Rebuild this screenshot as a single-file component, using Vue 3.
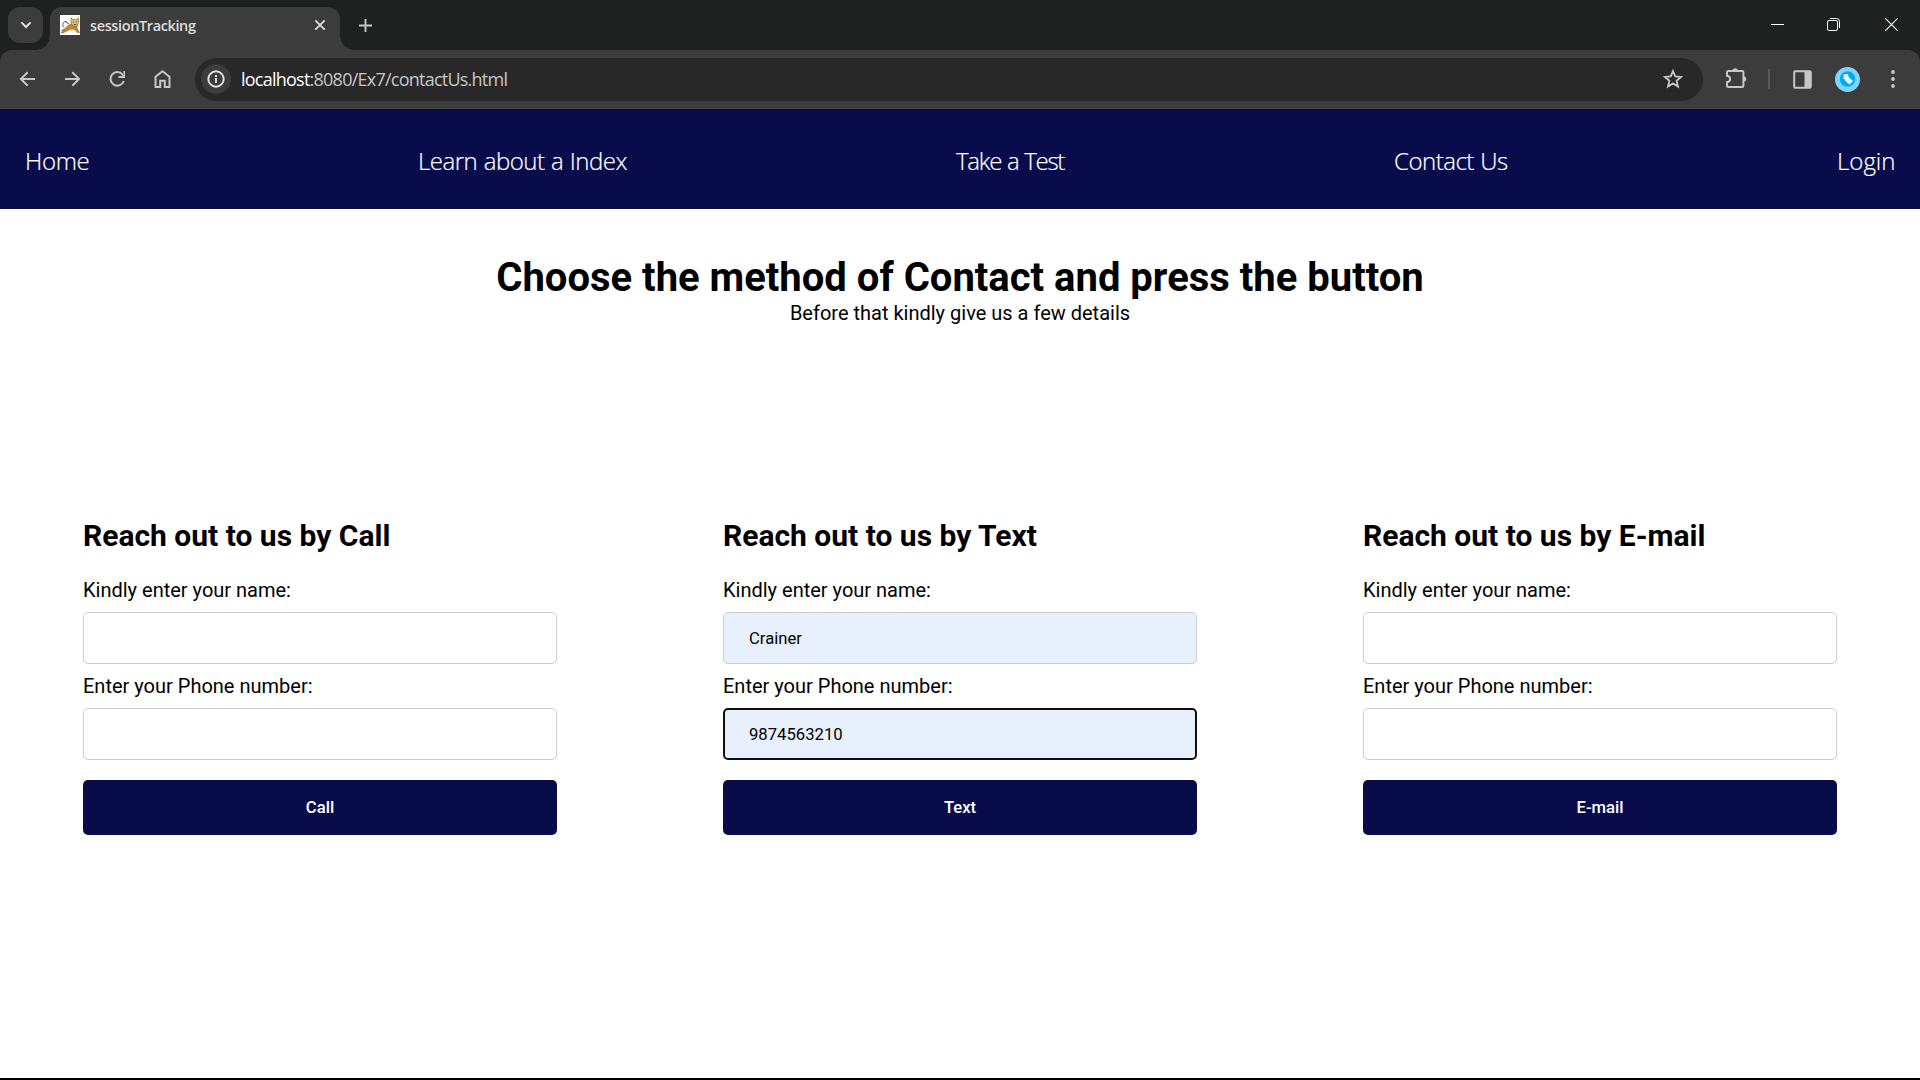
<script setup>
const links = [
  { text: 'Home', w: 65, ls: -0.35 },
  { text: 'Learn about a Index', w: 210, ls: -0.5 },
  { text: 'Take a Test', w: 110, ls: -1.25 },
  { text: 'Contact Us', w: 115, ls: -0.5 },
  { text: 'Login', w: 58, ls: 0 },
]
const forms = [
  { kind: 'Call', name: '', phone: '' },
  { kind: 'Text', name: 'Crainer', phone: '9874563210' },
  { kind: 'E-mail', name: '', phone: '' },
]
</script>

<template>
  <div class="window">
    <div class="tabstrip">
      <div class="search-tabs">
        <svg width="12" height="8" viewBox="0 0 12 8"><path d="M1.400 1.400 6 6l4.600-4.600" fill="none" stroke="#e3e3e3" stroke-width="2" /></svg>
      </div>
      <div class="tab">
        <svg class="favicon" width="20" height="20" viewBox="0 0 20 20">
          <rect width="20" height="20" fill="#fff" />
          <path d="M4 12.500C1.500 10 3 6 6.500 6.500M1.500 15.500l4-1.500M5 6.500l4 2.500" fill="none" stroke="#444" stroke-width=".9" />
          <path d="M6.500 12c2-2.500 4-2.500 6-3.500l5 .5-.5 4 2.500 4.500-2 .3-3-3.300-4-.2-4 1.900-4 2-1.500-.4 3.500-3.300z" fill="#c4892c" stroke="#5d4620" stroke-width=".4" />
          <path d="m11 3 2.300 1.600h3L18.500 3v5l-2 3.500h-3L11 8z" fill="#e6bf68" stroke="#54452a" stroke-width=".5" />
          <path d="M13 7h1M16 7h1M14 9.500h2" stroke="#333" stroke-width=".9" />
        </svg>
        <span class="tab-title">sessionTracking</span>
        <svg class="tab-close" width="12" height="12" viewBox="0 0 12 12"><path d="m1.300 1.300 9.400 9.400M10.700 1.300 1.300 10.700" stroke="#dedede" stroke-width="1.800" /></svg>
      </div>
      <svg class="plus" width="13" height="13" viewBox="0 0 13 13"><path d="M6.500 0v13M0 6.500h13" stroke="#c7c7c7" stroke-width="1.900" /></svg>
      <div class="controls">
        <svg width="14" height="14" viewBox="0 0 14 14"><path d="M0 6.500h13" stroke="#fff" /></svg>
        <svg class="restore" width="14" height="14" viewBox="0 0 14 14" fill="none" stroke="#fff"><rect x=".5" y="2.500" width="10" height="10" rx="1.500" /><path d="M3 .5h6.500a3 3 0 0 1 3 3V10" /></svg>
        <svg width="14" height="14" viewBox="0 0 14 14"><path d="m.2.2 12.600 12.600M12.800.2.2 12.800" stroke="#fff" stroke-width="1.100" /></svg>
      </div>
    </div>

    <div class="toolbar-back">
      <div class="toolbar">
        <div class="nav-icons">
          <svg width="16" height="16" viewBox="0 0 16 16"><path d="M16 8H2.500M8.700 1.200 1.900 8l6.800 6.800" fill="none" stroke="#c7c7c7" stroke-width="2" /></svg>
          <svg width="16" height="16" viewBox="0 0 16 16"><path d="M1 8H14.500M8.300 1.200 15.100 8l-6.800 6.800" fill="none" stroke="#c7c7c7" stroke-width="2" /></svg>
          <svg width="16" height="16" viewBox="0 0 16 16"><path d="M14.800 10A6.800 6.800 0 1 1 13.500 3.400l1.500 1.700M15.500 0v6H9.500" fill="none" stroke="#c7c7c7" stroke-width="2" /></svg>
          <svg width="18" height="18" viewBox="0 0 18 18"><path d="M1.500 6.800 8.500 1.300l7 5.500V17h-4.700v-6.200H6.200V17H1.500z" fill="none" stroke="#c7c7c7" stroke-width="2" /></svg>
        </div>
        <div class="omnibox">
          <div class="info">
            <svg width="18" height="18" viewBox="0 0 18 18"><circle cx="9" cy="9" r="7.700" fill="none" stroke="#e3e3e3" stroke-width="1.900" /><path d="M9 8v5M9 5v2" stroke="#e3e3e3" stroke-width="1.900" /></svg>
          </div>
          <span class="url"><b>localhost</b>:8080/Ex7/contactUs.html</span>
          <svg class="star" width="20" height="20" viewBox="0 0 20 20"><path d="m10 2 2.200 5.400 5.900.5-4.500 3.800 1.400 5.800-5-3.100-5 3.100 1.400-5.800L1.900 7.900l5.900-.5z" fill="none" stroke="#c7c7c7" stroke-width="1.800" /></svg>
        </div>
        <div class="actions">
          <svg class="ext" width="22" height="22" viewBox="0 0 22 22"><path d="M2 4.200c0-.7.500-1.200 1.200-1.200h14c.7 0 1.200.5 1.200 1.200v13.600c0 .7-.5 1.200-1.200 1.200h-14c-.7 0-1.200-.5-1.200-1.200v-3.600c4.200-.8 4.200-5.600 0-6.400z" fill="none" stroke="#c7c7c7" stroke-width="2" /><path d="M7.500 3a2.700 2.700 0 0 1 5.400 0zM18.500 8.300a2.700 2.700 0 0 1 0 5.400z" fill="#c7c7c7" /></svg>
          <span class="divider"></span>
          <svg class="panel" width="19" height="19" viewBox="0 0 19 19"><rect x="1.200" y="1.200" width="16.600" height="16.600" rx="1" fill="none" stroke="#c7c7c7" stroke-width="2" /><path d="M11.500 1H18v17h-6.500z" fill="#c7c7c7" /></svg>
          <svg class="avatar" width="25" height="25" viewBox="0 0 25 25"><circle cx="12.500" cy="12.500" r="12.500" fill="#7fd5fb" /><circle cx="12.500" cy="12" r="7.700" fill="#00a8f8" /><path d="M8.500 7.500 13 7l.7 3.200 4.300 3.800-3.500 3.500-4.500-3.700.2-1.300-1.700-.5z" fill="#e9f8ff" /></svg>
          <svg class="dots" width="4" height="18" viewBox="0 0 4 18" fill="#c7c7c7"><circle cx="2" cy="2" r="1.900" /><circle cx="2" cy="9" r="1.900" /><circle cx="2" cy="16" r="1.900" /></svg>
        </div>
      </div>
    </div>

    <nav class="site-nav">
      <a v-for="l in links" :key="l.text" :style="{ width: l.w + 'px', letterSpacing: l.ls + 'px' }">{{ l.text }}</a>
    </nav>

    <main>
      <header class="intro">
        <h1>Choose the method of Contact and press the button</h1>
        <p>Before that kindly give us a few details</p>
      </header>
      <section class="forms">
        <form v-for="f in forms" :key="f.kind" @submit.prevent>
          <h2>Reach out to us by {{ f.kind }}</h2>
          <label>Kindly enter your name:</label>
          <div class="field" :class="{ filled: f.name }">{{ f.name }}</div>
          <label>Enter your Phone number:</label>
          <div class="field" :class="{ filled: f.phone, focused: f.phone }">{{ f.phone }}</div>
          <button>{{ f.kind }}</button>
        </form>
      </section>
    </main>
  </div>
</template>

<style>
body { margin: 0; background: #fff; }
</style>

<style scoped>
* { box-sizing: border-box; }
svg { display: block; flex: none; }
.window { width: 1920px; height: 1080px; overflow: hidden; display: flex; flex-direction: column; background: #fff; border-bottom: 2px solid #000; font-family: Roboto, sans-serif; color: #000; }
.tabstrip { height: 50px; flex: none; display: flex; background: #1f2020; }
.search-tabs { width: 35px; height: 36px; margin: 7px 0 0 8px; border-radius: 12px; background: #3c3c3c; display: flex; align-items: center; justify-content: center; }
.tab { position: relative; width: 290px; height: 43px; margin: 7px 0 0 7px; padding: 0 14px 7px 10px; border-radius: 12px 12px 0 0; background: #3c3c3c; display: flex; align-items: center; }
.tab::before, .tab::after { content: ''; position: absolute; bottom: 0; width: 14px; height: 14px; }
.tab::before { right: 100%; background: radial-gradient(circle at 0 0, transparent 13.5px, #3c3c3c 14px); }
.tab::after { left: 100%; background: radial-gradient(circle at 100% 0, transparent 13.5px, #3c3c3c 14px); }
.tab-title { flex: 1; margin-left: 10px; padding-top: 2px; font: 600 14.5px/20px "Open Sans", sans-serif; letter-spacing: -.38px; color: #dedede; }
.plus { margin: 19px 0 0 19px; }
.controls { margin: 18px 21px 0 auto; display: flex; gap: 43px; }
.restore { margin: 0 1px 0 -1px; }
.toolbar-back { height: 59px; flex: none; background: #1f2020; }
.toolbar { height: 59px; display: flex; align-items: center; background: #3c3c3c; border-bottom: 1px solid #4a4a4a; border-radius: 12px 12px 0 0; }
.nav-icons { display: flex; align-items: center; gap: 29px; margin-left: 19px; width: 176px; }
.omnibox { width: 1508px; height: 43px; border-radius: 22px; background: #282828; display: flex; align-items: center; padding: 0 20px 0 6px; }
.info { width: 30px; height: 30px; border-radius: 50%; background: #3c3c3c; display: flex; align-items: center; justify-content: center; }
.url { flex: 1; margin-left: 10px; font: 18px/24px "Open Sans", sans-serif; color: #c7c7c7; letter-spacing: -.76px; }
.url b { font-weight: 400; color: #fff; }
.actions { flex: 1; display: flex; align-items: center; }
.ext { margin-left: 22px; }
.divider { width: 2px; height: 20px; background: #5a5a5a; margin-left: 21px; }
.panel { margin-left: 23px; }
.avatar { margin-left: 23px; }
.dots { margin-left: 31px; }
.site-nav { height: 100px; flex: none; display: flex; justify-content: space-between; align-items: center; padding: 4px 25px 0; background: #090c4a; color: #fff; font: 300 24px/32px "Open Sans", sans-serif; word-spacing: .8px; -webkit-text-stroke: .2px #fff; }
.site-nav a { white-space: nowrap; }
.intro { text-align: center; padding-top: 45px; }
h1 { margin: 0; font-size: 40px; line-height: 47px; font-weight: 700; }
.intro p { margin: 0; font-size: 20px; line-height: 24px; }
.forms { display: flex; padding-top: 193px; }
form { width: 640px; padding: 0 83px; display: flex; flex-direction: column; }
h2 { margin: 0 0 24px; font-size: 30px; line-height: 36px; font-weight: 700; }
label { font-size: 20px; line-height: 24px; margin-bottom: 10px; }
.field { height: 52px; margin-bottom: 10px; padding: 1px 25px 0; border: 1px solid #ccc; border-radius: 5px; font-size: 16.670px; line-height: 50px; }
.field.filled { background: #e8f0fe; }
.field.focused { border: 2px solid #101010; padding: 1px 24px 0; line-height: 48px; }
button { height: 55px; margin-top: 10px; padding: 1px 0 0; border: 0; border-radius: 5px; background: #090c4a; color: #fff; font: 500 16.670px/54px Roboto, sans-serif; }
</style>
